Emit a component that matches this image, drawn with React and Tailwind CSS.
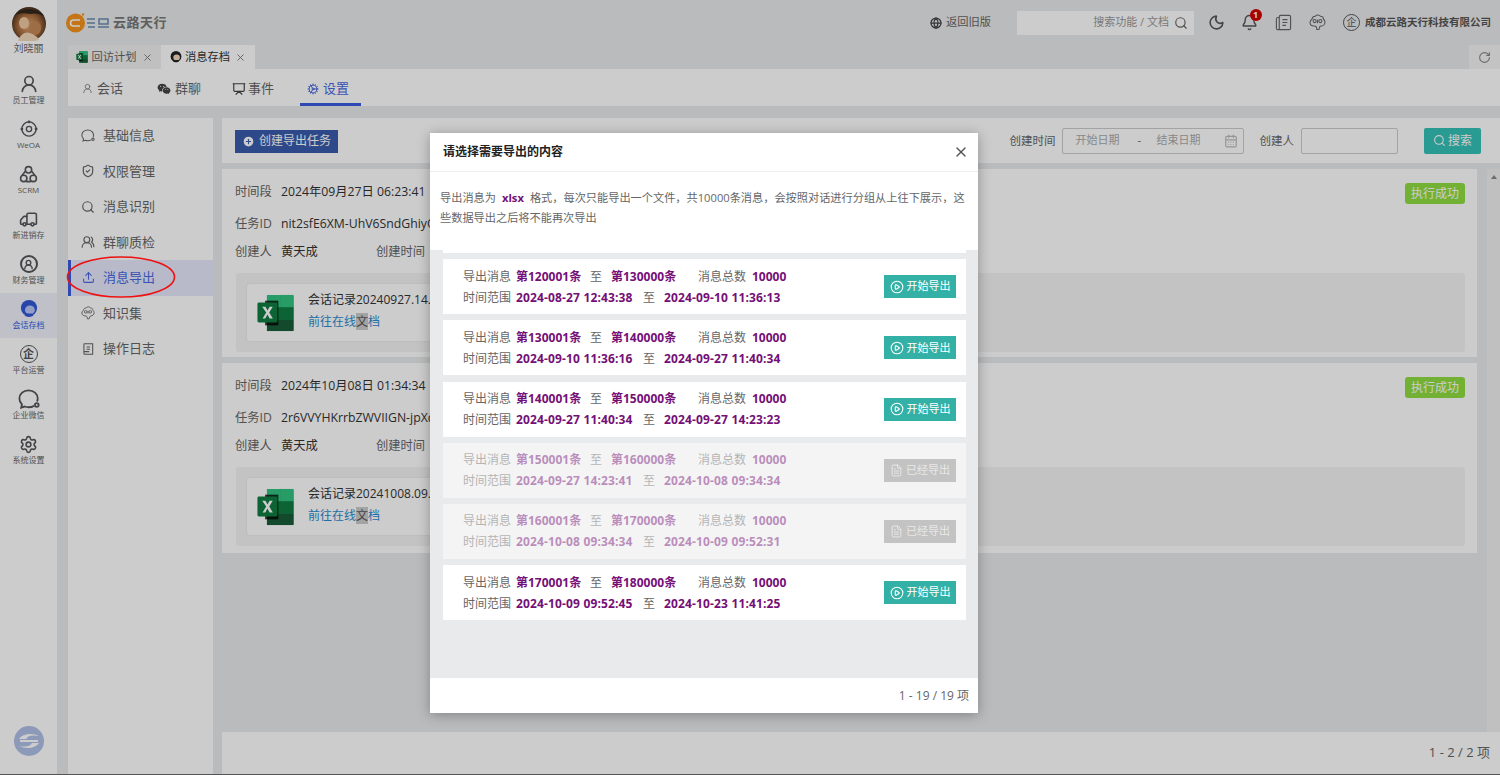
import {
  UserRound, Truck, Settings, Moon, Bell, FileText, Globe, Search, RotateCw, X,
  CalendarDays, Upload, ShieldCheck, UsersRound, CirclePlay, CirclePlus, Presentation, Cog,
} from "lucide-react";
import { RiWechatFill } from "react-icons/ri";

const FONT = "font-['Open_Sans','Noto_Sans_CJK_SC',sans-serif]";

const records = [
  { from: "第120001条", to: "第130000条", start: "2024-08-27 12:43:38", end: "2024-09-10 11:36:13" },
  { from: "第130001条", to: "第140000条", start: "2024-09-10 11:36:16", end: "2024-09-27 11:40:34" },
  { from: "第140001条", to: "第150000条", start: "2024-09-27 11:40:34", end: "2024-09-27 14:23:23" },
  { from: "第150001条", to: "第160000条", start: "2024-09-27 14:23:41", end: "2024-10-08 09:34:34", done: true },
  { from: "第160001条", to: "第170000条", start: "2024-10-08 09:34:34", end: "2024-10-09 09:52:31", done: true },
  { from: "第170001条", to: "第180000条", start: "2024-10-09 09:52:45", end: "2024-10-23 11:41:25" },
];

function Excel({ className }) {
  return (
    <svg viewBox="0 0 40 40" className={className}>
      <path d="M11 1h26a2 2 0 0 1 2 2v34a2 2 0 0 1-2 2H11z" fill="#21a366" />
      <rect x="11" y="1" width="14" height="13" fill="#33c481" rx="1" />
      <rect x="25" y="1" width="14" height="13" fill="#33c481" />
      <rect x="11" y="14" width="28" height="13" fill="#107c41" />
      <rect x="11" y="27" width="28" height="12" fill="#185c37" />
      <rect x="9" y="7" width="14" height="26" fill="#000" opacity="0.75" />
      <rect x="1" y="9" width="21" height="21" rx="1.5" fill="#107c41" />
      <path d="M6 13.5h3.4l2.2 3.8 2.2-3.8h3.3l-3.7 6 3.8 6.2h-3.4l-2.3-4-2.3 4H6.400l3.800-6.200z" fill="#fff" />
    </svg>
  );
}

function Avatar() {
  return (
    <svg viewBox="0 0 34 34" className="h-[34px] w-[34px]">
      <defs>
        <radialGradient id="av" cx="50%" cy="55%" r="60%">
          <stop offset="0%" stopColor="#e0a878" />
          <stop offset="55%" stopColor="#a86b3c" />
          <stop offset="100%" stopColor="#2c2118" />
        </radialGradient>
      </defs>
      <circle cx="17" cy="17" r="17" fill="url(#av)" />
      <path d="M3 8C9 0 26 0 32 9c-6-3-10-3-14-2C13 6 8 6 3 8z" fill="#33281c" />
      <ellipse cx="12" cy="16" rx="5" ry="6" fill="#efc9a0" />
      <ellipse cx="23" cy="21" rx="6" ry="7" fill="#c58a58" />
      <path d="M6 34c2-7 8-10 12-8 5 2 8 4 9 7l-8 2z" fill="#f2d9bb" />
    </svg>
  );
}

function HeadIcon({ className, hair, face }) {
  return (
    <svg viewBox="0 0 20 20" className={className}>
      <circle cx="10" cy="9" r="9" fill={hair} />
      <ellipse cx="11" cy="11" rx="5.500" ry="5" fill={face} />
      <path d="M5 17c2 2.500 8 2.500 10 0l-2-2H7z" fill={hair} />
    </svg>
  );
}

function WeoaIcon() {
  return (
    <svg viewBox="0 0 24 24" fill="none" stroke="#55565a" strokeWidth="1.800" className="h-[18px] w-[18px]">
      <circle cx="12" cy="12" r="9.500" />
      <circle cx="12" cy="12" r="3.500" />
      <circle cx="12" cy="2.500" r="1" fill="#55565a" />
      <circle cx="2.500" cy="12" r="1" fill="#55565a" />
      <circle cx="21.500" cy="12" r="1" fill="#55565a" />
    </svg>
  );
}

function ScrmIcon() {
  return (
    <svg viewBox="0 0 24 24" fill="none" stroke="#55565a" strokeWidth="2" className="h-[19px] w-[19px]">
      <circle cx="12" cy="6" r="4" />
      <circle cx="6" cy="17" r="4" />
      <circle cx="18" cy="17" r="4" />
      <path d="M8 8 4 13M16 8l4 5M9 21h6" />
    </svg>
  );
}

function BubbleIcon({ className, color = "#55565a", width = 2 }) {
  return (
    <svg viewBox="0 0 24 24" fill="none" stroke={color} strokeWidth={width} className={className}>
      <path d="M17.500 19.500C15.800 20.500 14 21 11.500 21c-1.500 0-3-.3-4.300-.8L3.500 21.500l.8-3.700C2.500 16 1.500 13.800 1.500 11.500 1.500 6.200 6 2.500 11.500 2.500s10 3.700 10 9c0 1.200-.2 2.200-.7 3.200" />
      <circle cx="20.500" cy="18.500" r="2" />
    </svg>
  );
}

function BrainHead({ className, color = "#666" }) {
  return (
    <svg viewBox="0 0 24 24" fill="none" stroke={color} strokeWidth="1.500" className={className}>
      <path d="M7 17c-3 0-5.500-2-5.500-5 0-2 1-3.500 2.500-4.200C4.500 5 6.500 3 9 3.200 10 2 11 1.500 12.500 1.500c1.500 0 3 .6 3.700 1.800C18.800 3.300 20.500 5 20.500 7.500c1.300.8 2 2.500 2 4 0 3-2.500 5.500-5.500 5.500-.8 0-1.500.5-2 1.500l-1 3.500h-3l-.5-3.500C10 17.500 8.500 17 7 17z" />
      <circle cx="8" cy="10" r="2.200" />
      <circle cx="16" cy="10" r="2.200" />
      <path d="M12 8v5" />
    </svg>
  );
}

function DocStack({ className }) {
  return (
    <svg viewBox="0 0 24 24" fill="none" stroke="#666" strokeWidth="1.600" className={className}>
      <rect x="6" y="2" width="16" height="20" rx="2" />
      <path d="M6 5H4a2 2 0 0 0-2 2v13a2 2 0 0 0 2 2h4M10.500 8h7M10.500 12h7M10.500 16h5" />
    </svg>
  );
}

function LogDoc({ className }) {
  return (
    <svg viewBox="0 0 24 24" fill="none" stroke="#666" strokeWidth="1.800" className={className}>
      <path d="M5 3h15v18H5M5 3v18M9.500 8.500h6M9.500 12.500h6M5 16.500h9" />
    </svg>
  );
}

function QiIcon({ className, text }) {
  return (
    <span className={`flex items-center justify-center rounded-full border-[#55565a] text-[#55565a] ${className} ${text}`}>企</span>
  );
}

function CompanyLogo() {
  return (
    <svg viewBox="0 0 46 20" className="h-[20px] w-[46px]">
      <circle cx="9.500" cy="10" r="9.500" fill="#f5931e" />
      <path d="M14 7H7.500a3 3 0 0 0 0 6H14" fill="none" stroke="#fff" strokeWidth="1.600" />
      <circle cx="17" cy="1.500" r="1.200" fill="#f5931e" />
      <path d="M21 6h8M21 10h8M22 14h7M33 6h9v5h-9zM32 14h11" fill="none" stroke="#6a8ab0" strokeWidth="1.500" />
    </svg>
  );
}

function SideItem({ icon, label, active }) {
  return (
    <div className={`flex h-[45px] flex-col items-center justify-center ${active ? "bg-[#eff0fb]" : ""}`}>
      <div className="flex h-[22px] items-center justify-center">{icon}</div>
      <span className={`-mt-px mb-[2px] text-[8px] leading-[12px] ${active ? "text-[#3a5ce0]" : "text-[#666]"}`}>{label}</span>
    </div>
  );
}

function MenuItem({ icon, label, active }) {
  return (
    <div className={`flex h-[35.500px] items-center gap-2 border-l-[3px] pl-[10px] text-[13px] ${active ? "border-[#3a5ce0] bg-[#e6e8fc] text-[#4a6ae0]" : "border-transparent text-[#666]"}`}>
      <span className="flex w-[14px] justify-center">{icon}</span>
      <span>{label}</span>
    </div>
  );
}

function SubTab({ icon, label, active, gap }) {
  return (
    <div className={`flex h-[37px] w-[61px] items-center border-b-[3px] pl-[7px] pt-[5px] text-[13px] ${gap} ${active ? "border-[#3a5ce0] text-[#4a6ae0]" : "border-transparent text-[#666]"}`}>
      {icon}
      <span>{label}</span>
    </div>
  );
}

function TaskCard({ range, id, name, height }) {
  return (
    <div className={`relative bg-white pl-[13px] pr-[12px] ${height}`}>
      <div className="absolute right-[12px] top-[14px] rounded-[3px] bg-[#8fde42] px-[6px] py-[1px] text-[12px] leading-[19px] text-white">执行成功</div>
      <div className="flex h-[46px] items-center text-[12.250px]">
        <span className="w-[46px] text-[#666]">时间段</span>
        <span className="text-[#333]">{range}</span>
      </div>
      <div className="flex h-[18px] items-center text-[12.250px]">
        <span className="w-[46px] text-[#666]">任务ID</span>
        <span className="text-[#333]">{id}</span>
      </div>
      <div className="flex h-[38px] items-center text-[12.250px]">
        <span className="w-[46px] text-[#666]">创建人</span>
        <span className="w-[95px] text-[#333]">黄天成</span>
        <span className="text-[#666]">创建时间</span>
      </div>
      <div className="ml-px mt-[2px] rounded-[3px] bg-[#f4f4f4] p-[11px]">
        <div className="flex h-[57px] w-[400px] items-center gap-[13px] rounded-[3px] bg-white pl-[9px] shadow-[0_0_2px_rgba(0,0,0,0.1)]">
          <Excel className="h-[38px] w-[39px]" />
          <div className="pb-[3px] text-[12px] leading-[22px]">
            <div className="text-[#333]">{name}</div>
            <div className="text-[#2a8bd0]">
              前往在线<span className="bg-[#ccc] text-[#555]">文</span>档
            </div>
          </div>
        </div>
      </div>
    </div>
  );
}

function RecordRow({ rec }) {
  return (
    <div className={`flex h-[55px] shrink-0 items-center justify-between pl-[20px] pr-[10px] text-[12px] ${rec.done ? "bg-[#f4f4f5]" : "bg-white"}`}>
      <div className={`leading-[21px] text-[#666] ${rec.done ? "opacity-45" : ""}`}>
        <div className="flex">
          <span className="w-[53px]">导出消息</span>
          <b className="w-[74px] font-bold text-[#740f78]">{rec.from}</b>
          <span className="w-[21px]">至</span>
          <b className="w-[87px] font-bold text-[#740f78]">{rec.to}</b>
          <span className="w-[54px]">消息总数</span>
          <b className="font-bold text-[#740f78]">10000</b>
        </div>
        <div className="flex">
          <span className="w-[53px]">时间范围</span>
          <b className="w-[127px] font-bold tracking-[0.15px] text-[#740f78]">{rec.start}</b>
          <span className="w-[21px]">至</span>
          <b className="font-bold tracking-[0.15px] text-[#740f78]">{rec.end}</b>
        </div>
      </div>
      {rec.done ? (
        <div className="flex h-[23px] w-[72px] items-center justify-center gap-[3px] bg-[#c3c3c3] text-[11px] text-[#e8e8e8]">
          <FileText size={13} strokeWidth={1.800} />
          已经导出
        </div>
      ) : (
        <div className="flex h-[23px] w-[72px] items-center justify-center gap-[3px] bg-[#33b1a6] text-[11px] text-white">
          <CirclePlay size={14} strokeWidth={1.800} />
          开始导出
        </div>
      )}
    </div>
  );
}

export default function App() {
  return (
    <div className={`relative flex h-[775px] w-[1500px] overflow-hidden border-b border-[#555] bg-[#e9eaec] ${FONT}`}>
      {/* left icon rail */}
      <aside className="flex w-[57px] shrink-0 flex-col bg-white">
        <div className="flex h-[68px] flex-col items-center pt-[7px]">
          <Avatar />
          <span className="mt-[1px] text-[10px] leading-[13px] text-[#666]">刘晓丽</span>
        </div>
        <SideItem label="员工管理" icon={<UserRound size={20} color="#55565a" strokeWidth={2} />} />
        <SideItem label="WeOA" icon={<WeoaIcon />} />
        <SideItem label="SCRM" icon={<ScrmIcon />} />
        <SideItem label="新进销存" icon={<Truck size={19} color="#55565a" strokeWidth={2} className="-scale-x-100" />} />
        <SideItem label="财务管理" icon={<span className="flex h-[18px] w-[18px] items-center justify-center rounded-full border-2 border-[#55565a]"><UserRound size={11} color="#55565a" strokeWidth={3} /></span>} />
        <SideItem active label="会话存档" icon={<HeadIcon className="h-[18px] w-[18px]" hair="#3158d8" face="#b9c6f5" />} />
        <SideItem label="平台运营" icon={<QiIcon className="h-[18px] w-[18px] border-[1.500px]" text="text-[11px] font-bold" />} />
        <SideItem label="企业微信" icon={<BubbleIcon className="h-[22px] w-[22px]" />} />
        <SideItem label="系统设置" icon={<Settings size={19} color="#55565a" strokeWidth={2} />} />
        <div className="mt-auto flex justify-center pb-[18px]">
          <svg viewBox="0 0 30 30" className="h-[30px] w-[30px]">
            <circle cx="15" cy="15" r="15" fill="#b0c0e8" />
            <path d="M5 13c4-6 14-6 20-3-6-1-11-1-13 3zM25 17c-4 6-14 6-20 3 6 1 11 1 13-3z" fill="#fff" />
            <rect x="6" y="14" width="18" height="2" fill="#fff" />
          </svg>
        </div>
      </aside>

      <div className="flex min-w-0 flex-1 flex-col">
        {/* top bar */}
        <header className="flex h-[45px] shrink-0 items-center pl-[9px] pr-[9px]">
          <CompanyLogo />
          <span className="ml-[1px] text-[13px] font-bold tracking-[0.5px] text-[#777]">云路天行</span>
          <div className="ml-auto flex items-center">
            <Globe size={12} color="#444" strokeWidth={2.500} />
            <span className="ml-[4px] text-[11.250px] text-[#666]">返回旧版</span>
            <div className="ml-[26px] flex h-[24px] w-[177px] items-center justify-end gap-[5px] bg-white pr-[6px] text-[11px] text-[#999]">
              搜索功能 / 文档
              <Search size={14} color="#666" />
            </div>
            <Moon size={17} color="#555" strokeWidth={2.200} className="ml-[13.500px]" />
            <div className="relative ml-[16px]">
              <Bell size={17} color="#555" />
              <span className="absolute -right-[4px] -top-[5px] flex h-[12px] w-[12px] items-center justify-center rounded-full bg-[#d40000] text-[9px] font-bold text-white">1</span>
            </div>
            <DocStack className="ml-[17px] h-[17px] w-[17px]" />
            <BrainHead className="ml-[17px] h-[17px] w-[17px]" />
            <QiIcon className="ml-[17.500px] h-[17px] w-[17px] border" text="text-[10px]" />
            <span className="ml-[5px] text-[10.500px] font-semibold text-[#555]">成都云路天行科技有限公司</span>
          </div>
        </header>

        {/* open tabs */}
        <div className="flex h-[24px] shrink-0 items-stretch pl-[11px]">
          <div className="flex w-[93px] items-center justify-center gap-[3px] bg-[#f0f0f0] text-[11.250px] text-[#666]">
            <Excel className="h-[12px] w-[12px]" />
            回访计划
            <X size={11} color="#777" className="ml-[2px]" />
          </div>
          <div className="flex w-[94px] items-center justify-center gap-[3px] bg-white text-[11.250px] text-[#333]">
            <HeadIcon className="h-[12px] w-[12px]" hair="#222" face="#f4d9c0" />
            消息存档
            <X size={11} color="#777" className="ml-[2px]" />
          </div>
          <div className="ml-auto flex w-[31px] items-center justify-center bg-[#f4f4f4]">
            <RotateCw size={13} color="#888" />
          </div>
        </div>

        {/* sub nav */}
        <nav className="ml-[11px] flex h-[37px] shrink-0 items-center gap-[14px] bg-white pl-[7px]">
          <SubTab label="会话" gap="gap-[4px]" icon={<UserRound size={11} color="#888" />} />
          <SubTab label="群聊" gap="gap-[4px]" icon={<RiWechatFill size={14} color="#444" />} />
          <SubTab label="事件" gap="gap-[2px]" icon={<Presentation size={14} color="#444" />} />
          <SubTab active label="设置" gap="gap-[4px]" icon={<Cog size={12} color="#4a6ae0" />} />
        </nav>

        <div className="ml-[11px] mt-[12px] flex min-h-0 flex-1 gap-[9px]">
          {/* settings menu */}
          <div className="w-[145px] shrink-0 bg-white">
            <MenuItem label="基础信息" icon={<BubbleIcon className="h-[15px] w-[15px]" color="#666" width={1.800} />} />
            <MenuItem label="权限管理" icon={<ShieldCheck size={14} color="#666" />} />
            <MenuItem label="消息识别" icon={<Search size={14} color="#666" />} />
            <MenuItem label="群聊质检" icon={<UsersRound size={14} color="#666" />} />
            <MenuItem active label="消息导出" icon={<Upload size={13} color="#4a6ae0" />} />
            <MenuItem label="知识集" icon={<BrainHead className="h-[14px] w-[14px]" />} />
            <MenuItem label="操作日志" icon={<LogDoc className="h-[14px] w-[14px]" />} />
          </div>

          {/* export tasks */}
          <div className="flex min-w-0 flex-1 flex-col">
            <div className="flex h-[45px] shrink-0 items-center bg-white pl-[13px] pr-[19px]">
              <div className="mt-px flex h-[23px] w-[103px] items-center justify-center gap-[4px] bg-[#3a5cac] text-[12px] text-white">
                <CirclePlus size={13} fill="#fff" color="#3a5cac" />
                创建导出任务
              </div>
              <span className="ml-auto text-[11.500px] text-[#666]">创建时间</span>
              <div className="ml-[6px] flex h-[26px] w-[182px] items-center rounded-[2px] border border-[#ccc] pl-[13px] pr-[5px] text-[11px] text-[#aaa]">
                <span className="w-[62px]">开始日期</span>
                <span className="w-[19px] text-[#666]">-</span>
                <span>结束日期</span>
                <CalendarDays size={14} color="#bbb" className="ml-auto" />
              </div>
              <span className="ml-[16px] text-[11.500px] text-[#666]">创建人</span>
              <div className="ml-[7px] h-[26px] w-[97px] rounded-[2px] border border-[#ccc]" />
              <div className="ml-[26px] flex h-[26px] w-[57px] items-center justify-center gap-[2px] rounded-[2px] bg-[#35c2b8] text-[12px] text-white">
                <Search size={13} />
                搜索
              </div>
            </div>

            <div className="mt-[6px] flex min-h-0 flex-1 gap-[10px]">
              <div className="flex min-w-0 flex-1 flex-col gap-[6px]">
                <TaskCard range="2024年09月27日 06:23:41" id="nit2sfE6XM-UhV6SndGhiyQ7pLk" name="会话记录20240927.14.xlsx" height="h-[188px]" />
                <TaskCard range="2024年10月08日 01:34:34" id="2r6VVYHKrrbZWVIIGN-jpXq3aTe" name="会话记录20241008.09.xlsx" height="h-[190px]" />
              </div>
              <div className="flex w-[13px] shrink-0 justify-center bg-[#f0f0f0] pt-[6px]">
                <span className="h-0 w-0 border-x-[3px] border-b-[4px] border-x-transparent border-b-[#888]" />
              </div>
            </div>

            <div className="flex h-[42px] shrink-0 items-center justify-end bg-white pr-[10px] text-[13px] text-[#666]">1 - 2 / 2 项</div>
          </div>
        </div>
      </div>

      {/* dim layer */}
      <div className="absolute inset-0 bg-black/20" />

      {/* hand drawn annotation */}
      <svg viewBox="0 0 110 44" className="absolute left-[66px] top-[255px] h-[44px] w-[110px]" fill="none">
        <ellipse cx="55" cy="22" rx="53.500" ry="20" stroke="#ee1111" strokeWidth="1.600" />
      </svg>

      {/* export dialog */}
      <div className="absolute left-[430px] top-[133px] flex h-[580px] w-[548px] flex-col bg-white shadow-[0_2px_12px_rgba(0,0,0,0.3)]">
        <div className="flex h-[39px] shrink-0 items-center justify-between border-b border-[#eee] pl-[13px] pr-[9px]">
          <span className="text-[12px] font-semibold text-[#222]">请选择需要导出的内容</span>
          <X size={16} color="#555" />
        </div>
        <div className="h-[78px] shrink-0 whitespace-nowrap px-[10px] pt-[16px] text-[11.200px] leading-[20px] text-[#666]">
          <div>
            <span>导出消息为</span>
            <b className="mx-[6px] font-bold text-[#740f78]">xlsx</b>
            <span>格式，每次只能导出一个文件，共10000条消息，会按照对话进行分组从上往下展示，这</span>
          </div>
          <div>些数据导出之后将不能再次导出</div>
        </div>
        <div className="flex min-h-0 flex-1 flex-col gap-[6.200px] overflow-hidden bg-[#e9eaec] pl-[13px] pr-[12px]">
          <div className="h-[3px] shrink-0 bg-white" />
          {records.map((rec) => (
            <RecordRow key={rec.from} rec={rec} />
          ))}
        </div>
        <div className="flex h-[35px] shrink-0 items-center justify-end pr-[9px] text-[12px] text-[#666]">1 - 19 / 19 项</div>
      </div>
    </div>
  );
}
